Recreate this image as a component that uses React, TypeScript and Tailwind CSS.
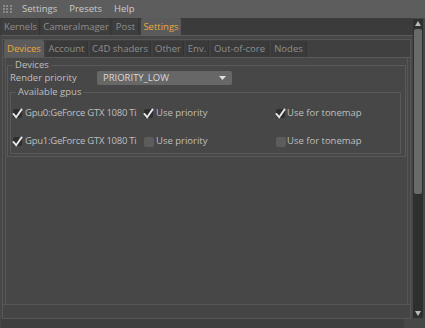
import React from "react";

const font = { fontFamily: '"Open Sans", "Noto Sans", sans-serif' };

const Check: React.FC<{on: boolean}> = ({on}) => (
    <span className="relative inline-flex w-[11px] h-[11px] shrink-0">
        {on ? (
            <>
                <span className="absolute left-[1px] top-[1px] w-[9px] h-[9px] rounded-[2px] bg-[#2e2e2e]"/>
                <svg width="11" height="11" viewBox="0 0 12 12" className="absolute top-0 left-0">
                    <path d="M1.5 6.5 L4.5 10 L10.5 1.5" stroke="#e8e8e8" strokeWidth="2" fill="none" strokeLinecap="round"/>
                </svg>
            </>
        ) : (
            <span className="absolute left-[1px] top-[1px] w-[10px] h-[10px] rounded-[2px] bg-[#5c5c5c]"/>
        )}
    </span>
);

const GpuRow: React.FC<{name: string; priority: boolean; tonemap: boolean}> = ({name, priority, tonemap}) => (
    <div className="flex items-center h-[14px] text-[#bfbfbf]">
        <div className="flex items-center gap-[2px] w-[131px]">
            <Check on={true}/>
            <span className="whitespace-nowrap tracking-[-0.25px]">{name}</span>
        </div>
        <div className="flex items-center gap-[2px] w-[132px]">
            <Check on={priority}/>
            <span className="whitespace-nowrap">Use priority</span>
        </div>
        <div className="flex items-center gap-[1px]">
            <Check on={tonemap}/>
            <span className="whitespace-nowrap">Use for tonemap</span>
        </div>
    </div>
);

export default function App() {
    const outerTabs = [["Kernels", "w-[38px]"], ["CameraImager", "w-[69px]"], ["Post", "w-[26px]"]];
    const innerTabs = [["Account", "w-[42px]"], ["C4D shaders", "w-[61px]"], ["Other", "w-[31px]"], ["Env.", "w-[23px]"], ["Out-of-core", "w-[58px]"], ["Nodes", "w-[36px]"]];
    return (
        <div className="w-[425px] h-[328px] bg-[#474747] flex flex-col text-[9.5px] leading-none overflow-hidden" style={font}>
            <div className="h-[18px] bg-[#5d5d5d] flex items-center text-[#cacaca] shrink-0">
                <div className="grid grid-cols-3 gap-[1px] w-[9px] ml-[3px] mr-[10px]">
                    {Array.from({length: 9}).map((_, i) => (
                        <span key={i} className="w-[2px] h-[2px] bg-[#8a8a8a]"/>
                    ))}
                </div>
                <span className="mr-[12px]">Settings</span>
                <span className="mr-[12px]">Presets</span>
                <span>Help</span>
            </div>
            <div className="flex flex-1 min-h-0">
                <div className="flex-1 flex flex-col min-w-0">
                    <div className="h-[17px] bg-[#3b3b3b] flex items-end pl-[2px] gap-[2px] shrink-0">
                        {outerTabs.map(([t, w]) => (
                            <div key={t} className={`${w} h-[16px] justify-center flex items-center whitespace-nowrap text-[#8e8e8e] bg-[#3e3e3e] border-r border-[#333]`}>{t}</div>
                        ))}
                        <div className="w-[40px] h-[17px] justify-center flex items-center whitespace-nowrap text-[#e9a93a] bg-[#5a5a5a] rounded-t-[2px]">Settings</div>
                    </div>
                    <div className="flex-1 flex flex-col border-t border-[#5c5c5c] ml-[1px] mr-[1px] min-h-0">
                        <div className="flex-1 flex flex-col border border-[#565656] mt-[3px] mx-[1px] min-h-0">
                            <div className="h-[17px] bg-[#404040] flex items-end pl-[1px] gap-[2px] shrink-0">
                                <div className="w-[40px] h-[17px] justify-center flex items-center whitespace-nowrap text-[#e9a93a] bg-[#5c5c5c] rounded-t-[2px]">Devices</div>
                                {innerTabs.map(([t, w]) => (
                                    <div key={t} className={`${w} h-[16px] justify-center flex items-center whitespace-nowrap text-[#8e8e8e] bg-[#3a3a3a] border-r border-[#333]`}>{t}</div>
                                ))}
                            </div>
                            <div className="flex-1 flex flex-col border-t border-[#5a5a5a] pl-[2px] pr-[2px] min-h-0">
                                <div className="flex-1 border-l border-r border-[#565656] flex flex-col">
                                    <div className="relative border border-[#5a5a5a] mt-[7px] ml-[1px] mr-[1px] pl-[2px] pr-[4px] pt-[4px] pb-[2px]">
                                        <span className="absolute -top-[6px] left-[5px] px-[2px] bg-[#474747] text-[#bfbfbf]">Devices</span>
                                        <div className="flex items-center h-[15px] text-[#bfbfbf]">
                                            <span className="w-[87px]">Render priority</span>
                                            <div className="w-[135px] h-[14px] bg-[#676767] rounded-[2px] flex items-center justify-between px-[6px] text-[#d8d8d8]">
                                                <span>PRIORITY_LOW</span>
                                                <svg width="7" height="4" viewBox="0 0 7 4"><path d="M0 0 H7 L3.5 4 Z" fill="#e0e0e0"/></svg>
                                            </div>
                                        </div>
                                        <div className="relative border border-[#5a5a5a] mt-[7px] pl-[1px] pt-[13px] pb-[5px] flex flex-col gap-[14px]">
                                            <span className="absolute -top-[6px] left-[5px] px-[2px] bg-[#474747] text-[#bfbfbf]">Available gpus</span>
                                            <GpuRow name="Gpu0:GeForce GTX 1080 Ti" priority={true} tonemap={true}/>
                                            <GpuRow name="Gpu1:GeForce GTX 1080 Ti" priority={false} tonemap={false}/>
                                        </div>
                                    </div>
                                </div>
                            </div>
                            <div className="h-[14px] border-t border-[#575757] bg-[#454545] shrink-0"/>
                        </div>
                        <div className="h-[9px] bg-[#3f3f3f] shrink-0 mr-[8px]"/>
                    </div>
                </div>
                <div className="w-[10px] mr-[2px] mt-[1px] mb-[10px] bg-[#2f2f2f] flex flex-col items-center">
                    <svg width="8" height="8" viewBox="0 0 8 8" className="mt-[1px]"><path d="M4 1 L7 6 H1 Z" fill="#bbbbbb"/></svg>
                    <div className="w-[8px] h-[165px] bg-[#6a6a6a] rounded-[2px] mt-[1px]"/>
                    <div className="flex-1"/>
                    <svg width="8" height="8" viewBox="0 0 8 8" className="mb-[1px]"><path d="M4 7 L7 2 H1 Z" fill="#bbbbbb"/></svg>
                </div>
            </div>
        </div>
    );
}
